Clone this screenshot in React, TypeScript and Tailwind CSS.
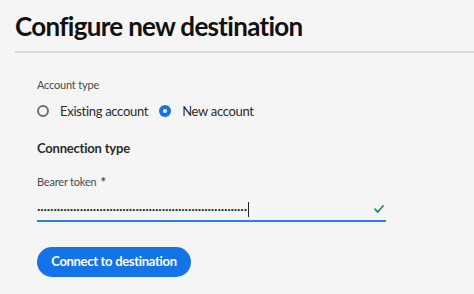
import React from "react";

function Radio({ checked }: { checked?: boolean }) {
  return checked ? (
    <span className="w-3 h-3 rounded-full bg-[#1473e6] flex items-center justify-center">
      <span className="w-1 h-1 rounded-full bg-white"></span>
    </span>
  ) : (
    <span className="w-3 h-3 rounded-full border-2 border-[#6e6e6e]"></span>
  );
}

export default function App() {
  return (
    <div className="w-[474px] h-[294px] bg-[#f5f5f5] font-['Lato',sans-serif] overflow-hidden">
      <div className="pl-[15px] pt-[9px]">
        <h1 className="text-[26px] leading-[34px] font-bold tracking-[-0.7px] text-[#111]">Configure new destination</h1>
        <div className="mt-[8px] h-[2px] bg-[#d6d6d6]"></div>
      </div>
      <div className="pl-[37px] pt-[24px] w-[386px]">
        <div className="text-[11px] tracking-[-0.2px] text-[#4b4b4b]">Account type</div>
        <div className="mt-[8px] flex items-center gap-[11px]">
          <label className="flex items-center gap-[11px]">
            <Radio />
            <span className="text-[13px] tracking-[-0.3px] text-[#2c2c2c]">Existing account</span>
          </label>
          <label className="flex items-center gap-[11px]">
            <Radio checked />
            <span className="text-[13px] tracking-[-0.3px] text-[#2c2c2c]">New account</span>
          </label>
        </div>
        <div className="mt-[18px] text-[13px] font-bold tracking-[-0.2px] text-[#2c2c2c]">Connection type</div>
        <div className="mt-[14px] text-[11px] tracking-[-0.2px] text-[#4b4b4b] flex items-center gap-1">
          Bearer token <span className="text-[13px] font-bold">*</span>
        </div>
        <div className="mt-[6px] h-[24px] border-b-2 border-[#2680eb] flex items-center justify-between pr-[2px]">
          <span className="flex items-center">
            <span className="text-[6px] tracking-[-0.2px] text-[#333]">{"•".repeat(64)}</span>
            <span className="w-px h-[15px] bg-[#222] ml-[1px]"></span>
          </span>
          <svg width="10" height="8" viewBox="0 0 10 8" fill="none">
            <path d="M1 4.2 L3.8 7 L9 1" stroke="#268e6c" strokeWidth="1.8" strokeLinecap="round" strokeLinejoin="round" />
          </svg>
        </div>
        <button className="mt-[25px] h-[30px] w-[154px] rounded-full bg-[#1473e6] text-white text-[13px] font-bold tracking-[-0.3px]">
          Connect to destination
        </button>
      </div>
    </div>
  );
}
